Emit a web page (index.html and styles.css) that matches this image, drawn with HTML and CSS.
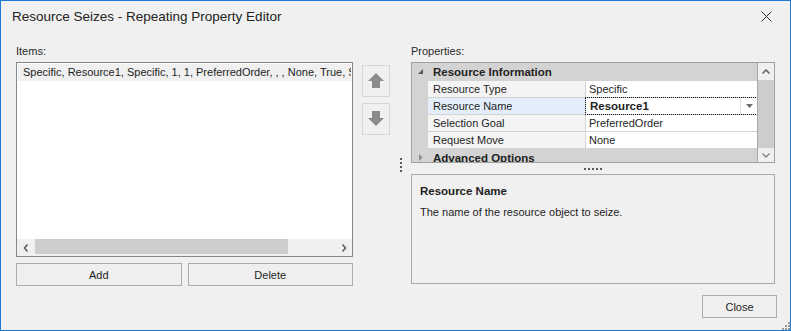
FILE: index.html
```html
<!DOCTYPE html>
<html>
<head>
<meta charset="utf-8">
<title>Resource Seizes - Repeating Property Editor</title>
<link rel="stylesheet" href="styles.css">
</head>
<body>
<div class="window">
  <div class="titlebar">
    <span class="title">Resource Seizes - Repeating Property Editor</span>
    <svg class="close-x" width="11" height="11" viewBox="0 0 11 11"><path d="M0.5 0.5 L10.5 10.5 M10.5 0.5 L0.5 10.5" stroke="#2a2a2a" stroke-width="1" fill="none"/></svg>
  </div>
  <div class="body">
    <div class="items-col">
      <div class="label">Items:</div>
      <div class="list">
        <div class="list-rows">
          <div class="list-item">Specific, Resource1, Specific, 1, 1, PreferredOrder, , , None, True, Specific, 1</div>
        </div>
        <div class="hscroll">
          <div class="sb-btn"><svg width="6" height="8" viewBox="0 0 6 8"><path d="M4.5 0.5 L1.5 4 L4.5 7.5" stroke="#606060" stroke-width="1.6" fill="none"/></svg></div>
          <div class="hs-track"><div class="hs-thumb"></div></div>
          <div class="sb-btn"><svg width="6" height="8" viewBox="0 0 6 8"><path d="M1.5 0.5 L4.5 4 L1.5 7.5" stroke="#606060" stroke-width="1.6" fill="none"/></svg></div>
        </div>
      </div>
      <div class="btn-row">
        <button class="btn">Add</button>
        <button class="btn">Delete</button>
      </div>
    </div>
    <div class="arrow-col">
      <button class="move-btn"><svg width="28" height="32" viewBox="0 0 28 32"><path d="M14 8 L22 16 L18 16 L18 23 L10 23 L10 16 L6 16 Z" fill="#8c8c8c"/></svg></button>
      <button class="move-btn"><svg width="28" height="32" viewBox="0 0 28 32"><path d="M10 8 L18 8 L18 15 L22 15 L14 23 L6 15 L10 15 Z" fill="#8c8c8c"/></svg></button>
    </div>
    <div class="vsplit"><span class="dot"></span><span class="dot"></span><span class="dot"></span><span class="dot"></span></div>
    <div class="props-col">
      <div class="label">Properties:</div>
      <div class="grid">
        <div class="grid-main">
          <div class="cat-row">
            <span class="gutter"><svg width="5" height="5" viewBox="0 0 5 5"><path d="M5 0 L5 5 L0 5 Z" fill="#595959"/></svg></span>
            <span class="cat-name">Resource Information</span>
          </div>
          <div class="prop-row"><span class="pname">Resource Type</span><span class="pval">Specific</span></div>
          <div class="prop-row sel"><span class="pname">Resource Name</span><span class="pval"><span class="pval-text">Resource1</span><span class="dd"><svg width="7" height="4" viewBox="0 0 7 4"><path d="M0 0 L7 0 L3.5 4 Z" fill="#707070"/></svg></span></span></div>
          <div class="prop-row"><span class="pname">Selection Goal</span><span class="pval">PreferredOrder</span></div>
          <div class="prop-row"><span class="pname">Request Move</span><span class="pval">None</span></div>
          <div class="cat-row">
            <span class="gutter"><svg width="4" height="7" viewBox="0 0 4 7"><path d="M0 0 L3.5 3.5 L0 7 Z" fill="#8a8a8a"/></svg></span>
            <span class="cat-name">Advanced Options</span>
          </div>
        </div>
        <div class="vscroll">
          <div class="vs-btn"><svg width="8" height="5" viewBox="0 0 8 5"><path d="M0.5 4.5 L4 1 L7.5 4.5" stroke="#606060" stroke-width="1.5" fill="none"/></svg></div>
          <div class="vs-thumb"></div>
          <div class="vs-btn down"><svg width="8" height="5" viewBox="0 0 8 5"><path d="M0.5 0.5 L4 4 L7.5 0.5" stroke="#808080" stroke-width="1.3" fill="none"/></svg></div>
        </div>
      </div>
      <div class="hsplit"><span class="dot"></span><span class="dot"></span><span class="dot"></span><span class="dot"></span><span class="dot"></span></div>
      <div class="desc">
        <div class="desc-title">Resource Name</div>
        <div class="desc-text">The name of the resource object to seize.</div>
      </div>
    </div>
  </div>
  <div class="footer">
    <button class="btn close-btn">Close</button>
  </div>
  <svg class="grip" width="8" height="8" viewBox="0 0 8 8"><g fill="#9a9a9a"><rect x="6" y="0" width="2" height="2"/><rect x="3" y="3" width="2" height="2"/><rect x="6" y="3" width="2" height="2"/><rect x="0" y="6" width="2" height="2"/><rect x="3" y="6" width="2" height="2"/><rect x="6" y="6" width="2" height="2"/></g></svg>
</div>
</body>
</html>
```
FILE: styles.css
```css
* { box-sizing: border-box; }
html, body { margin: 0; padding: 0; }
body {
  font-family: "Liberation Sans", Arial, sans-serif;
  font-size: 11px;
  color: #1e1e1e;
  background: #f0f0f0;
}
.window {
  position: relative;
  width: 791px;
  height: 331px;
  border: 1px solid #1c7cd5;
  background: #f0f0f0;
  display: flex;
  flex-direction: column;
  overflow: hidden;
}
.titlebar {
  height: 31px;
  flex-shrink: 0;
  display: flex;
  align-items: center;
  justify-content: space-between;
  padding: 0 18px 0 11px;
}
.title {
  font-size: 13.5px;
  color: #222;
}
.close-x { display: block; }
.body {
  display: flex;
  padding: 12px 0 0 15px;
}
.label {
  height: 14px;
  line-height: 14px;
  margin-bottom: 4px;
  color: #2a2a2a;
}
.items-col {
  width: 337px;
  display: flex;
  flex-direction: column;
}
.list {
  height: 195px;
  border: 1px solid #828790;
  background: #fff;
  display: flex;
  flex-direction: column;
}
.list-rows {
  flex: 1;
  padding: 1px 1px 0;
  overflow: hidden;
}
.list-item {
  height: 17px;
  line-height: 17px;
  padding-left: 5px;
  background: #f0f0f0;
  white-space: nowrap;
  overflow: hidden;
}
.hscroll {
  height: 17px;
  display: flex;
  background: #f0f0f0;
}
.sb-btn {
  width: 17px;
  display: flex;
  align-items: center;
  justify-content: center;
}
.hs-track {
  flex: 1;
  padding-left: 1px;
}
.hs-thumb {
  width: 253px;
  height: 15px;
  background: #cdcdcd;
}
.btn-row {
  display: flex;
  gap: 6px;
  margin-top: 6px;
}
.btn {
  height: 23px;
  flex: 1;
  border: 1px solid #adadad;
  background: #efefef;
  font-family: inherit;
  font-size: 11px;
  color: #1e1e1e;
  padding: 0;
}
.arrow-col {
  width: 28px;
  margin-left: 9px;
  padding-top: 21px;
  display: flex;
  flex-direction: column;
  gap: 6px;
}
.move-btn {
  width: 28px;
  height: 32px;
  border: 1px solid #d6d6d6;
  background: #f0f0f0;
  padding: 0;
  position: relative;
}
.move-btn svg {
  position: absolute;
  left: -1px;
  top: -1px;
}
.vsplit {
  width: 21px;
  display: flex;
  flex-direction: column;
  align-items: center;
  justify-content: center;
  gap: 2px;
  padding-left: 1px;
}
.dot {
  width: 2px;
  height: 2px;
  background: #5a5a5a;
  display: block;
}
.props-col {
  width: 364px;
  display: flex;
  flex-direction: column;
}
.grid {
  height: 101px;
  border: 1px solid #a0a0a0;
  background: #d3d3d3;
  display: flex;
}
.grid-main {
  width: 345px;
  display: flex;
  flex-direction: column;
  gap: 1px;
  overflow: hidden;
}
.cat-row {
  height: 17px;
  flex-shrink: 0;
  display: flex;
  align-items: center;
  font-weight: bold;
  font-size: 11.5px;
  color: #222;
}
.gutter {
  width: 16px;
  display: flex;
  align-items: center;
  justify-content: center;
  padding-left: 1px;
}
.cat-name { padding-left: 5px; }
.prop-row {
  height: 16px;
  flex-shrink: 0;
  display: flex;
  gap: 1px;
  margin-left: 16px;
  line-height: 16px;
}
.pname {
  width: 157px;
  background: #f4f4f4;
  padding-left: 5px;
  white-space: nowrap;
}
.pval {
  flex: 1;
  background: #fff;
  padding-left: 3px;
  white-space: nowrap;
}
.prop-row.sel .pname { background: #e3eefa; }
.prop-row.sel .pval {
  outline: 1px dotted #111;
  display: flex;
  padding-left: 4px;
}
.pval-text {
  flex: 1;
  font-weight: bold;
  font-size: 11.5px;
}
.dd {
  width: 17px;
  border-left: 1px solid #e2e2e2;
  display: flex;
  align-items: center;
  justify-content: center;
}
.vscroll {
  width: 17px;
  border-left: 1px solid #a8a8a8;
  display: flex;
  flex-direction: column;
}
.vs-btn {
  height: 17px;
  background: #f0f0f0;
  display: flex;
  align-items: center;
  justify-content: center;
}
.vs-btn.down { height: 14px; }
.vs-thumb {
  flex: 1;
  background: #cdcdcd;
}
.hsplit {
  height: 11px;
  display: flex;
  align-items: center;
  justify-content: center;
  gap: 2px;
}
.desc {
  height: 110px;
  border: 1px solid #a9a9a9;
  padding: 9px 8px;
}
.desc-title {
  font-weight: bold;
  font-size: 11.5px;
  line-height: 14px;
}
.desc-text {
  margin-top: 7px;
  line-height: 14px;
}
.footer {
  display: flex;
  justify-content: flex-end;
  padding-right: 13px;
  margin-top: 9px;
}
.close-btn {
  flex: none;
  width: 75px;
}
.grip {
  position: absolute;
  right: 0;
  bottom: 0;
}
```
